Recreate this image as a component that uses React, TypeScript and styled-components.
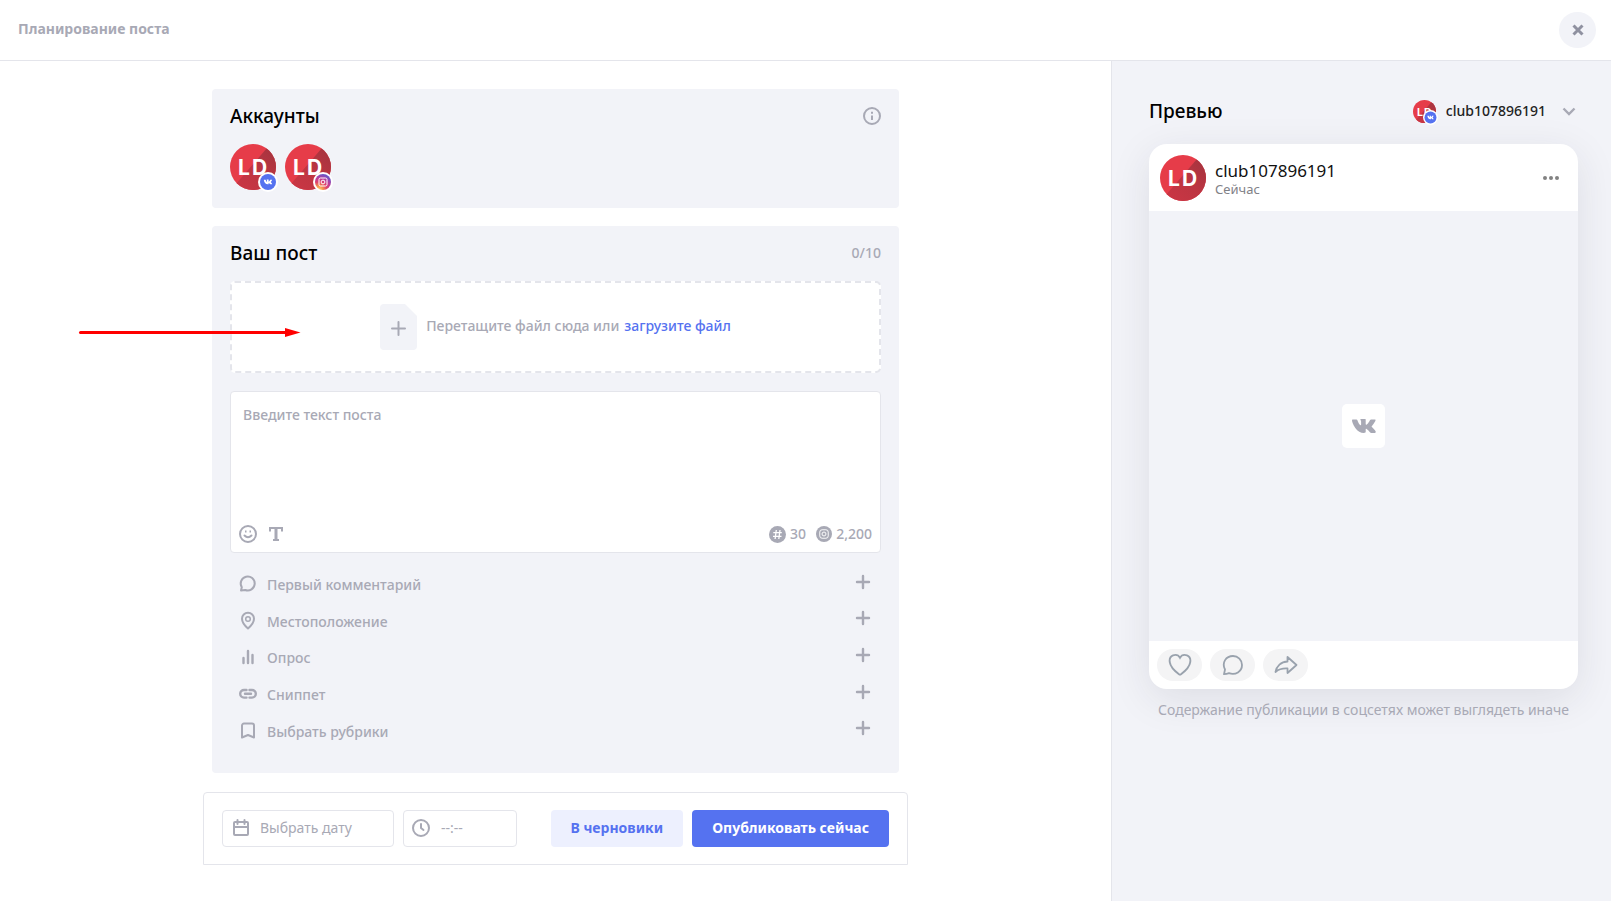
import React from "react";
import styled, { createGlobalStyle } from "styled-components";

const Global = createGlobalStyle`
  *, *::before, *::after { box-sizing: border-box; }
  body { margin: 0; background: #fff; font-family: "Noto Sans", sans-serif; font-size: 14px; line-height: 20px; color: #000; }
  button, input, textarea { font: inherit; margin: 0; }
  button { border: 0; background: none; padding: 0; cursor: pointer; }
  svg { display: block; flex: none; }
`;

const muted = "#a8a9b5";
const line = "#e4e5eb";
const panel = "#f2f3f8";
const accent = "#5572f0";

const Page = styled.div`
  min-height: 100vh;
  display: flex;
  flex-direction: column;
`;
const Header = styled.header`
  display: flex;
  align-items: center;
  justify-content: space-between;
  height: 61px;
  padding: 0 15px 1px 18px;
  border-bottom: 1px solid ${line};
`;
const PageTitle = styled.h1`
  margin: 0;
  padding-bottom: 2px;
  font-size: 14px;
  font-weight: 700;
  color: ${muted};
`;
const CloseButton = styled.button`
  display: grid;
  place-items: center;
  width: 37px;
  height: 36px;
  border-radius: 50%;
  background: ${panel};
`;
const Body = styled.div`
  flex: 1;
  display: flex;
`;
const Editor = styled.main`
  position: relative;
  flex: 1;
  padding: 28px 0 36px;
`;
const Column = styled.div`
  max-width: 705px;
  margin: 0 auto;
`;
const Card = styled.section<{ $bottom: number }>`
  margin: 0 9px 18px;
  padding: 15px 18px ${(p) => p.$bottom}px;
  border-radius: 4px;
  background: ${panel};
`;
const CardHead = styled.div`
  display: flex;
  align-items: center;
  justify-content: space-between;
  height: 24px;
`;
const Heading = styled.h2`
  margin: 0;
  font-size: 19px;
  line-height: 24px;
  font-weight: 500;
`;
const Counter = styled.span`
  font-weight: 500;
  color: ${muted};
`;
const Accounts = styled.div`
  display: flex;
  gap: 9px;
  margin-top: 16px;
`;
const AvatarBox = styled.span<{ $size: number }>`
  position: relative;
  display: block;
  width: ${(p) => p.$size}px;
  height: ${(p) => p.$size}px;
`;
const BadgeBox = styled.span`
  position: absolute;
  right: -2px;
  bottom: -2px;
`;
const DropZone = styled.div`
  display: flex;
  align-items: center;
  justify-content: center;
  gap: 9px;
  height: 92px;
  margin-top: 16px;
  border: 2px dashed ${line};
  border-radius: 5px;
  background: #fff;
  font-weight: 500;
  color: ${muted};
`;
const TextLink = styled.a`
  color: ${accent};
  text-decoration: none;
`;
const DropText = styled.span`
  display: flex;
  gap: 5px;
  padding-bottom: 3px;
`;
const TextBox = styled.div`
  display: flex;
  flex-direction: column;
  height: 162px;
  margin-top: 18px;
  border: 1px solid ${line};
  border-radius: 4px;
  background: #fff;
`;
const PostInput = styled.textarea`
  flex: 1;
  padding: 13px 12px 0;
  border: 0;
  outline: 0;
  resize: none;
  background: transparent;
  font-weight: 500;
  border-radius: 4px;
  &::placeholder { color: ${muted}; opacity: 1; }
`;
const TextTools = styled.div`
  display: flex;
  align-items: center;
  gap: 10px;
  height: 36px;
  padding: 0 8px;
`;
const Spacer = styled.span`
  flex: 1;
`;
const Limit = styled.span`
  display: flex;
  align-items: center;
  gap: 4px;
  font-weight: 500;
  color: ${muted};
`;
const Options = styled.ul`
  display: flex;
  flex-direction: column;
  height: 183px;
  margin: 13px 0 0;
  padding: 0 10px 0 8px;
  list-style: none;
`;
const Option = styled.li`
  flex: 1;
  display: flex;
`;
const OptionButton = styled.button`
  flex: 1;
  display: flex;
  align-items: center;
  color: ${muted};
  font-weight: 500;
  text-align: left;
`;
const OptionLabel = styled.span`
  flex: 1;
  padding: 2px 0 0 9px;
`;
const AddIcon = styled.span`
  padding-bottom: 5px;
`;
const Footer = styled.footer`
  display: flex;
  align-items: center;
  gap: 9px;
  height: 73px;
  margin-top: 19px;
  padding: 0 18px;
  border: 1px solid ${line};
  border-radius: 4px 4px 0 0;
`;
const Field = styled.label<{ $width: number }>`
  display: flex;
  align-items: center;
  gap: 9px;
  width: ${(p) => p.$width}px;
  height: 37px;
  padding: 0 8px 1px;
  border: 1px solid ${line};
  border-radius: 4px;
`;
const FieldInput = styled.input`
  flex: 1;
  min-width: 0;
  padding: 0;
  border: 0;
  outline: 0;
  background: transparent;
  &::placeholder { color: ${muted}; opacity: 1; }
`;
const ActionButton = styled.button<{ $primary?: boolean }>`
  height: 37px;
  padding: 0 20px 2px;
  border-radius: 4px;
  background: ${(p) => (p.$primary ? accent : "#edf0fe")};
  color: ${(p) => (p.$primary ? "#fff" : accent)};
  font-weight: 700;
  white-space: nowrap;
`;
const Aside = styled.aside`
  width: 500px;
  padding: 38px 33px 0 37px;
  border-left: 1px solid ${line};
  background: ${panel};
`;
const AccountPicker = styled.button`
  display: flex;
  align-items: center;
  font-weight: 500;
  color: #222;
`;
const PickerName = styled.span`
  margin: 0 14px 0 10px;
`;
const Preview = styled.article`
  margin-top: 21px;
  border-radius: 18px;
  background: #fff;
  box-shadow: 0 10px 40px rgba(40, 40, 60, 0.1);
`;
const PreviewHead = styled.div`
  display: flex;
  align-items: center;
  gap: 9px;
  height: 67px;
  padding: 0 18px 0 11px;
`;
const Author = styled.div`
  flex: 1;
  padding-top: 2px;
`;
const AuthorName = styled.div`
  font-size: 17px;
  line-height: 20px;
  color: #111;
`;
const PostTime = styled.div`
  font-size: 13px;
  line-height: 16px;
  color: #818187;
`;
const Media = styled.div`
  display: grid;
  place-items: center;
  aspect-ratio: 429 / 430;
  background: ${panel};
`;
const MediaMark = styled.span`
  display: grid;
  place-items: center;
  width: 43px;
  height: 44px;
  border-radius: 5px;
  background: #fff;
`;
const Reactions = styled.div`
  display: flex;
  align-items: center;
  gap: 8px;
  height: 48px;
  padding: 0 8px;
`;
const Reaction = styled.button`
  display: grid;
  place-items: center;
  width: 45px;
  height: 32px;
  border-radius: 16px;
  background: #f4f4f5;
  color: #99a2ad;
`;
const Note = styled.p`
  margin: 11px 0 0;
  text-align: center;
  color: ${muted};
`;
const Pointer = styled.svg`
  position: absolute;
  left: 78px;
  top: 265px;
`;

const VkMark = () => (
  <svg width="24" height="14" viewBox="0 0 24 14">
    <path
      d="M0.600 0.400H4.500C4.900 0.400 5.100 0.600 5.300 1.100C6.300 4 7.700 6.300 8.600 6.300C9 6.300 9.100 6.100 9.100 5.300V2.500C9 1.200 8.300 1.100 8.300 0.600C8.300 0.300 8.600 0.100 8.900 0.100H13C13.600 0.100 13.700 0.400 13.700 1V5C13.700 5.600 13.900 5.700 14.100 5.700C14.500 5.700 15 5.300 15.900 4.400C17.100 2.900 18.100 1 18.100 1C18.300 0.700 18.600 0.400 19.100 0.400H22.700C23.500 0.400 23.700 0.800 23.500 1.400C23 3 19.900 7 19.900 7C19.600 7.400 19.500 7.600 19.900 8.100C20.400 8.800 23.200 11.200 23.700 12.600C24 13.400 23.500 13.900 22.800 13.900H19.200C18.300 13.900 17.900 13.100 16.200 11.300C14.700 9.900 14.300 9.800 14 9.800C13.700 9.800 13.700 10 13.700 10.500V12.800C13.700 13.500 13.400 13.900 11.700 13.900C8.800 13.900 5.600 12.200 3.300 8.900C0.900 5.400 0 2.600 0 1.200C0 0.700 0.200 0.400 0.600 0.400Z"
      fill={muted}
    />
  </svg>
);

const Badge = ({ kind, size }: { kind: "vk" | "ig"; size: number }) => (
  <svg width={size} height={size} viewBox="0 0 20 20">
    <defs>
      <radialGradient id="igFill" cx="0.25" cy="1" r="1">
        <stop offset="0" stopColor="#fdd870" />
        <stop offset="0.25" stopColor="#f5954f" />
        <stop offset="0.5" stopColor="#e0436a" />
        <stop offset="0.75" stopColor="#b93c9c" />
        <stop offset="1" stopColor="#6b54c6" />
      </radialGradient>
    </defs>
    <circle cx="10" cy="10" r="10" fill="#fff" />
    <circle cx="10" cy="10" r="8" fill={kind === "vk" ? accent : "url(#igFill)"} />
    {kind === "vk" ? (
      <path
        transform="translate(5.800 7.500) scale(.35)"
        fill="#fff"
        d="M0 .4h5.300c1 3 2.400 5.900 3.800 5.900V2.500L8 .1h5.700v5.600c1.500 0 3.500-2.700 4.400-5.300h5.700c-.5 2.500-2.500 5-3.900 6.900 1.500 1.400 3.500 3.500 4.100 6.600h-5.300c-1.500-1.800-3-4.100-5-4.100v4.100h-2C5 13.900.5 7.500 0 .4Z"
      />
    ) : (
      <g fill="none" stroke="#fff" strokeWidth="1">
        <rect x="6" y="6" width="8" height="8" rx="1.500" />
        <circle cx="10" cy="10" r="1.900" />
      </g>
    )}
  </svg>
);

const Avatar = ({ size, kind, badge = 20 }: { size: number; kind?: "vk" | "ig"; badge?: number }) => (
  <AvatarBox $size={size}>
    <svg width={size} height={size} viewBox="0 0 46 46" role="img" aria-label="LD">
      <defs>
        <clipPath id="disc">
          <circle cx="23" cy="23" r="23" />
        </clipPath>
        <linearGradient id="shade" x1="0" y1="1" x2="1" y2="0">
          <stop offset="0" stopColor="#cb3644" />
          <stop offset="0.500" stopColor="#be3542" />
          <stop offset="1" stopColor="#a2343e" />
        </linearGradient>
      </defs>
      <g clipPath="url(#disc)">
        <rect width="46" height="46" fill="#e63c49" />
        <path d="M37 4L5 41V46H46V4Z" fill="url(#shade)" />
      </g>
      <g fill="#fff" fontFamily="Inter, sans-serif" fontWeight="700" fontSize="21">
        <text x="8" y="31">L</text>
        <text x="22" y="31">D</text>
      </g>
    </svg>
    {kind && (
      <BadgeBox>
        <Badge kind={kind} size={badge} />
      </BadgeBox>
    )}
  </AvatarBox>
);

const Plus = () => (
  <svg width="16" height="16" viewBox="0 0 16 16" stroke={muted} strokeWidth="2.400" strokeLinecap="round">
    <path d="M8 2V14M2 8H14" />
  </svg>
);

const iconProps = {
  width: 20,
  height: 20,
  viewBox: "0 0 20 20",
  fill: "none",
  stroke: muted,
  strokeWidth: 2,
  strokeLinecap: "round" as const,
  strokeLinejoin: "round" as const,
};

const optionIcons = {
  comment: (
    <svg {...iconProps}>
      <path d="M3 16.500L3.800 13.200A7 7 0 1 1 7.200 16Z" />
    </svg>
  ),
  place: (
    <svg {...iconProps}>
      <path d="M10 17.500C6.500 14.500 4 11.500 4 7.800A6 6 0 0 1 16 7.800C16 11.500 13.500 14.500 10 17.500Z" />
      <circle cx="10" cy="8" r="2.300" strokeWidth="1.500" />
    </svg>
  ),
  poll: (
    <svg {...iconProps} strokeWidth="2.400">
      <path d="M5.500 11V16M10 4V16M14.500 8V16" />
    </svg>
  ),
  link: (
    <svg {...iconProps} strokeWidth="2.400">
      <path d="M8.500 6H6A3.800 3.800 0 0 0 6 13.600H8.500M11.500 6H14A3.800 3.800 0 0 1 14 13.600H11.500M7 9.800H13" />
    </svg>
  ),
  mark: (
    <svg {...iconProps}>
      <path d="M4 16.500V4.500A2 2 0 0 1 6 2.500H14A2 2 0 0 1 16 4.500V16.500L10 14Z" />
    </svg>
  ),
};

const options: { label: string; icon: keyof typeof optionIcons }[] = [
  { label: "Первый комментарий", icon: "comment" },
  { label: "Местоположение", icon: "place" },
  { label: "Опрос", icon: "poll" },
  { label: "Сниппет", icon: "link" },
  { label: "Выбрать рубрики", icon: "mark" },
];

export default function App() {
  return (
    <Page>
      <Global />
      <Header>
        <PageTitle>Планирование поста</PageTitle>
        <CloseButton aria-label="Закрыть">
          <svg width="12" height="12" viewBox="0 0 12 12" stroke="#8f91a0" strokeWidth="3">
            <path d="M1.500 1.500L10.500 10.500M10.500 1.500L1.500 10.500" />
          </svg>
        </CloseButton>
      </Header>
      <Body>
        <Editor>
          <Column>
            <Card $bottom={18}>
              <CardHead>
                <Heading>Аккаунты</Heading>
                <svg width="18" height="18" viewBox="0 0 18 18" fill="none" stroke={muted} strokeWidth="2">
                  <circle cx="9" cy="9" r="8" />
                  <path d="M9 8.500V13M9 4.800V6.800" />
                </svg>
              </CardHead>
              <Accounts>
                <Avatar size={46} kind="vk" />
                <Avatar size={46} kind="ig" />
              </Accounts>
            </Card>
            <Card $bottom={24}>
              <CardHead>
                <Heading>Ваш пост</Heading>
                <Counter>0/10</Counter>
              </CardHead>
              <DropZone>
                <svg width="37" height="46" viewBox="0 0 37 46">
                  <path d="M4 0H25L37 12V42A4 4 0 0 1 33 46H4A4 4 0 0 1 0 42V4A4 4 0 0 1 4 0Z" fill={panel} />
                  <path d="M18.500 18V31M12 24.500H25" stroke={muted} strokeWidth="2" strokeLinecap="round" />
                </svg>
                <DropText>
                  Перетащите файл сюда или <TextLink href="#upload">загрузите файл</TextLink>
                </DropText>
              </DropZone>
              <TextBox>
                <PostInput aria-label="Текст поста" placeholder="Введите текст поста" />
                <TextTools>
                  <button aria-label="Эмодзи">
                    <svg width="18" height="18" viewBox="0 0 18 18" fill="none" stroke={muted} strokeWidth="2">
                      <circle cx="9" cy="9" r="8" />
                      <path d="M5.500 10.500Q9 14 12.500 10.500" strokeLinecap="round" />
                      <path d="M6 6.500H7.500M10.500 6.500H12" />
                    </svg>
                  </button>
                  <button aria-label="Форматирование">
                    <svg width="18" height="18" viewBox="0 0 18 18" fill="none" stroke={muted} strokeWidth="2">
                      <path d="M3 6.500V3H15V6.500M6 15H12" />
                      <path d="M9 3V15" strokeWidth="3" />
                    </svg>
                  </button>
                  <Spacer />
                  <Limit>
                    <svg width="17" height="17" viewBox="0 0 17 17">
                      <circle cx="8.500" cy="8.500" r="8.500" fill={muted} />
                      <path d="M7.300 4L6.100 13M11 4L9.800 13M4.300 6.700H12.800M4 10.300H12.500" stroke="#fff" strokeWidth="1.300" />
                    </svg>
                    30
                  </Limit>
                  <Limit>
                    <svg width="16" height="16" viewBox="0 0 17 17">
                      <circle cx="8.500" cy="8.500" r="8.500" fill={muted} />
                      <g fill="none" stroke="#fff">
                        <rect x="4" y="4" width="9" height="9" rx="2.500" />
                        <circle cx="8.500" cy="8.500" r="2.100" />
                      </g>
                    </svg>
                    2,200
                  </Limit>
                </TextTools>
              </TextBox>
              <Options>
                {options.map((o) => (
                  <Option key={o.label}>
                    <OptionButton>
                      {optionIcons[o.icon]}
                      <OptionLabel>{o.label}</OptionLabel>
                      <AddIcon>
                        <Plus />
                      </AddIcon>
                    </OptionButton>
                  </Option>
                ))}
              </Options>
            </Card>
            <Footer>
              <Field $width={172}>
                <svg {...iconProps}>
                  <path d="M4 4H16A1 1 0 0 1 17 5V16A1 1 0 0 1 16 17H4A1 1 0 0 1 3 16V5A1 1 0 0 1 4 4ZM3 9H17M6.500 2V6M13.500 2V6" />
                </svg>
                <FieldInput aria-label="Дата" placeholder="Выбрать дату" />
              </Field>
              <Field $width={114}>
                <svg {...iconProps}>
                  <circle cx="9" cy="10" r="8" />
                  <path d="M9 6V10L11.500 12" />
                </svg>
                <FieldInput aria-label="Время" placeholder="--:--" />
              </Field>
              <Spacer />
              <ActionButton>В черновики</ActionButton>
              <ActionButton $primary>Опубликовать сейчас</ActionButton>
            </Footer>
          </Column>
          <Pointer width="224" height="13" viewBox="0 0 224 13" aria-hidden="true">
            <path d="M2.500 6.500H210" stroke="#f00" strokeWidth="3" strokeLinecap="round" />
            <path d="M207 2L222.500 6.500L207 11Z" fill="#f00" />
          </Pointer>
        </Editor>
        <Aside>
          <CardHead>
            <Heading>Превью</Heading>
            <AccountPicker>
              <Avatar size={23} kind="vk" badge={15} />
              <PickerName>club107896191</PickerName>
              <svg width="18" height="18" viewBox="0 0 18 18" fill="none" stroke={muted} strokeWidth="2.400">
                <path d="M3.500 6.500L9 12L14.500 6.500" />
              </svg>
            </AccountPicker>
          </CardHead>
          <Preview>
            <PreviewHead>
              <Avatar size={46} />
              <Author>
                <AuthorName>club107896191</AuthorName>
                <PostTime>Сейчас</PostTime>
              </Author>
              <button aria-label="Ещё">
                <svg width="18" height="6" viewBox="0 0 18 6" fill="#828282">
                  <circle cx="3" cy="3" r="2" />
                  <circle cx="9" cy="3" r="2" />
                  <circle cx="15" cy="3" r="2" />
                </svg>
              </button>
            </PreviewHead>
            <Media>
              <MediaMark>
                <VkMark />
              </MediaMark>
            </Media>
            <Reactions>
              <Reaction aria-label="Нравится">
                <svg width="24" height="24" viewBox="0 0 24 24" fill="none" stroke="currentColor" strokeWidth="1.800">
                  <path d="M12 4.800C10.500 2 7.500 1.500 5 2.300C2.500 3.300 1.300 6 1.700 9C2.500 14 8 19 11 21.200Q12 22 13 21.200C16 19 21.500 14 22.300 9C22.700 6 21.500 3.300 19 2.300C16.500 1.500 13.500 2 12 4.800Z" />
                </svg>
              </Reaction>
              <Reaction aria-label="Комментировать">
                <svg width="22" height="22" viewBox="0 0 22 22" fill="none" stroke="currentColor" strokeWidth="1.800" strokeLinejoin="round">
                  <path d="M2 20.200L3 15.500C-0.500 8.500 4 2 11 2C16 2 20 6 20 11C20 17.500 13.500 21.500 7 19.200C5.500 19.800 3.500 20.200 2 20.200Z" />
                </svg>
              </Reaction>
              <Reaction aria-label="Поделиться">
                <svg width="24" height="20" viewBox="0 0 24 20" fill="none" stroke="currentColor" strokeWidth="1.800" strokeLinejoin="round">
                  <path d="M13.500 2L22.500 10L13.500 18V13.500C8 13.200 4.500 14.500 1.500 17C2.500 11 7 6.700 13.500 6.500Z" />
                </svg>
              </Reaction>
            </Reactions>
          </Preview>
          <Note>Содержание публикации в соцсетях может выглядеть иначе</Note>
        </Aside>
      </Body>
    </Page>
  );
}
